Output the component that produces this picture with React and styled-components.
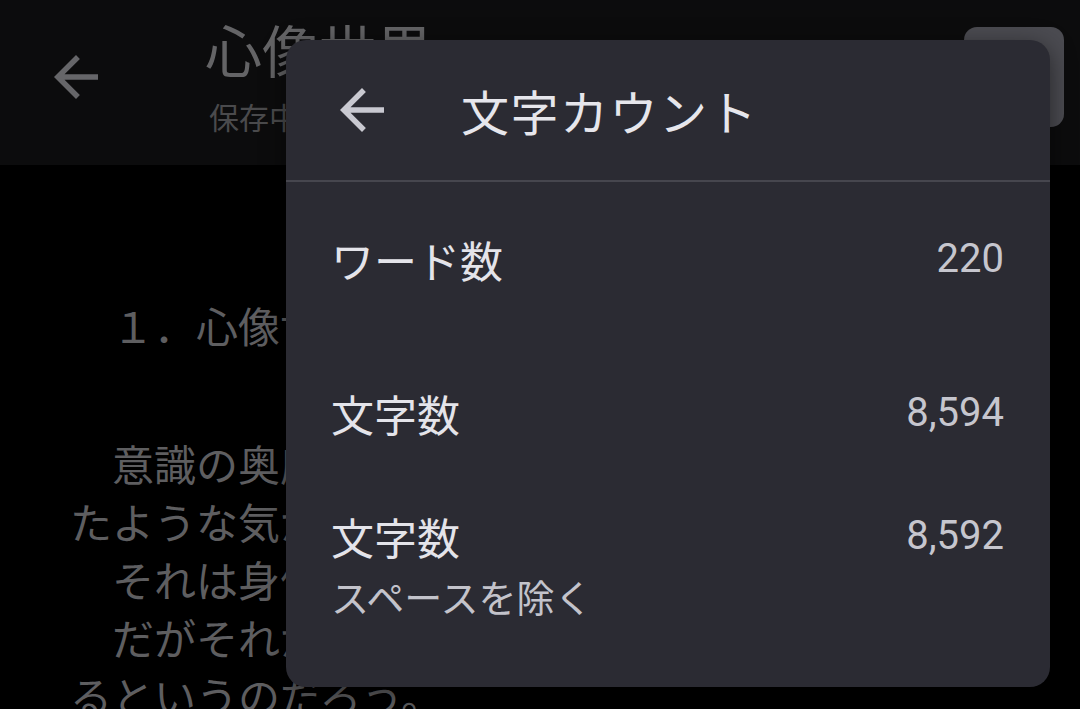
import React from 'react';
import styled, { createGlobalStyle } from 'styled-components';

const GlobalStyle = createGlobalStyle`
    html, body {
        margin: 0;
        padding: 0;
        background: #000;
    }
    body {
        font-family: "Noto Sans CJK JP", "Noto Sans", sans-serif;
    }
`;

const Screen = styled.div`
    position: relative;
    width: 1080px;
    height: 709px;
    overflow: hidden;
    background: #000;
`;

const TopBar = styled.div`
    height: 165px;
    display: flex;
    align-items: flex-start;
    background: #0c0c0d;
`;

const BarBack = styled.div`
    width: 66px;
    height: 66px;
    margin: 44px 0 0 43px;
    color: #666669;
`;

const TitleBlock = styled.div`
    display: flex;
    flex-direction: column;
    margin-left: 96px;
    padding-top: 8px;
`;

const DocTitle = styled.div`
    font-size: 57px;
    line-height: 80px;
    color: #646466;
    white-space: nowrap;
`;

const DocStatus = styled.div`
    font-size: 30px;
    line-height: 40px;
    margin-top: 8px;
    color: #4a4a4c;
    padding-left: 4px;
`;

const SquareButton = styled.div`
    width: 100px;
    height: 100px;
    margin: 27px 16px 0 auto;
    border-radius: 13px;
    background: #4b4b51;
`;

const Page = styled.div`
    padding: 131px 70px 0 70px;
    color: #5e5e60;
    font-size: 42px;
    line-height: 58px;
`;

const Heading = styled.div`
    white-space: nowrap;
    overflow: hidden;
    margin-bottom: 80px;
`;

const Line = styled.div`
    white-space: nowrap;
    overflow: hidden;
`;

const Dialog = styled.div`
    position: absolute;
    left: 286px;
    top: 40px;
    width: 764px;
    height: 647px;
    border-radius: 20px;
    background: #2b2b33;
    box-shadow: 0 6px 24px rgba(0, 0, 0, 0.5);
    display: flex;
    flex-direction: column;
`;

const DialogHeader = styled.div`
    height: 140px;
    display: flex;
    align-items: center;
    padding-left: 43px;
    border-bottom: 2px solid #46464e;
`;

const BackIcon = styled.div`
    width: 66px;
    height: 66px;
    color: #c9c9d1;
    margin-right: 66px;
`;

const DialogTitle = styled.div`
    font-size: 48px;
    color: #e6e6ec;
    letter-spacing: 1.5px;
`;

const Row = styled.div`
    height: 154px;
    display: flex;
    align-items: ${p => (p.top ? 'flex-start' : 'center')};
    justify-content: space-between;
    padding: ${p => (p.top ? '16px' : '0')} 46px 0 45px;
    box-sizing: border-box;
`;

const Label = styled.div`
    display: flex;
    flex-direction: column;
`;

const LabelMain = styled.div`
    font-size: 43px;
    line-height: 60px;
    color: #e4e4ea;
`;

const LabelSub = styled.div`
    font-size: 38px;
    line-height: 60px;
    color: #c3c3cb;
`;

const Value = styled.div`
    font-family: "Roboto", "Noto Sans", sans-serif;
    font-size: 40px;
    line-height: 60px;
    color: #c6c6ce;
`;

const Arrow = () => (
    <svg viewBox="0 0 24 24" width="100%" height="100%">
        <path
            d="M20 11H7.83l5.59-5.59L12 4l-8 8 8 8 1.41-1.41L7.83 13H20v-2z"
            fill="currentColor"
        />
    </svg>
);

const counts = [
    { label: 'ワード数', value: '220' },
    { label: '文字数', value: '8,594' },
    { label: '文字数', sub: 'スペースを除く', value: '8,592' },
];

export default function App() {
    return (
        <Screen>
            <GlobalStyle />
            <TopBar>
                <BarBack>
                    <Arrow />
                </BarBack>
                <TitleBlock>
                    <DocTitle>心像世界</DocTitle>
                    <DocStatus>保存中...</DocStatus>
                </TitleBlock>
                <SquareButton />
            </TopBar>
            <Page>
                <Heading>　１．心像世界</Heading>
                <Line>　意識の奥底に沈んでいた記憶が、ふと浮かび</Line>
                <Line>たような気がした。その光景は</Line>
                <Line>　それは身体の感覚とは異なる世界</Line>
                <Line>　だがそれが真実だとして、何が変わ</Line>
                <Line>るというのだろう。</Line>
            </Page>
            <Dialog>
                <DialogHeader>
                    <BackIcon>
                        <Arrow />
                    </BackIcon>
                    <DialogTitle>文字カウント</DialogTitle>
                </DialogHeader>
                {counts.map((c, i) => (
                    <Row key={i} top={c.sub ? 1 : 0}>
                        <Label>
                            <LabelMain>{c.label}</LabelMain>
                            {c.sub && <LabelSub>{c.sub}</LabelSub>}
                        </Label>
                        <Value>{c.value}</Value>
                    </Row>
                ))}
            </Dialog>
        </Screen>
    );
}
